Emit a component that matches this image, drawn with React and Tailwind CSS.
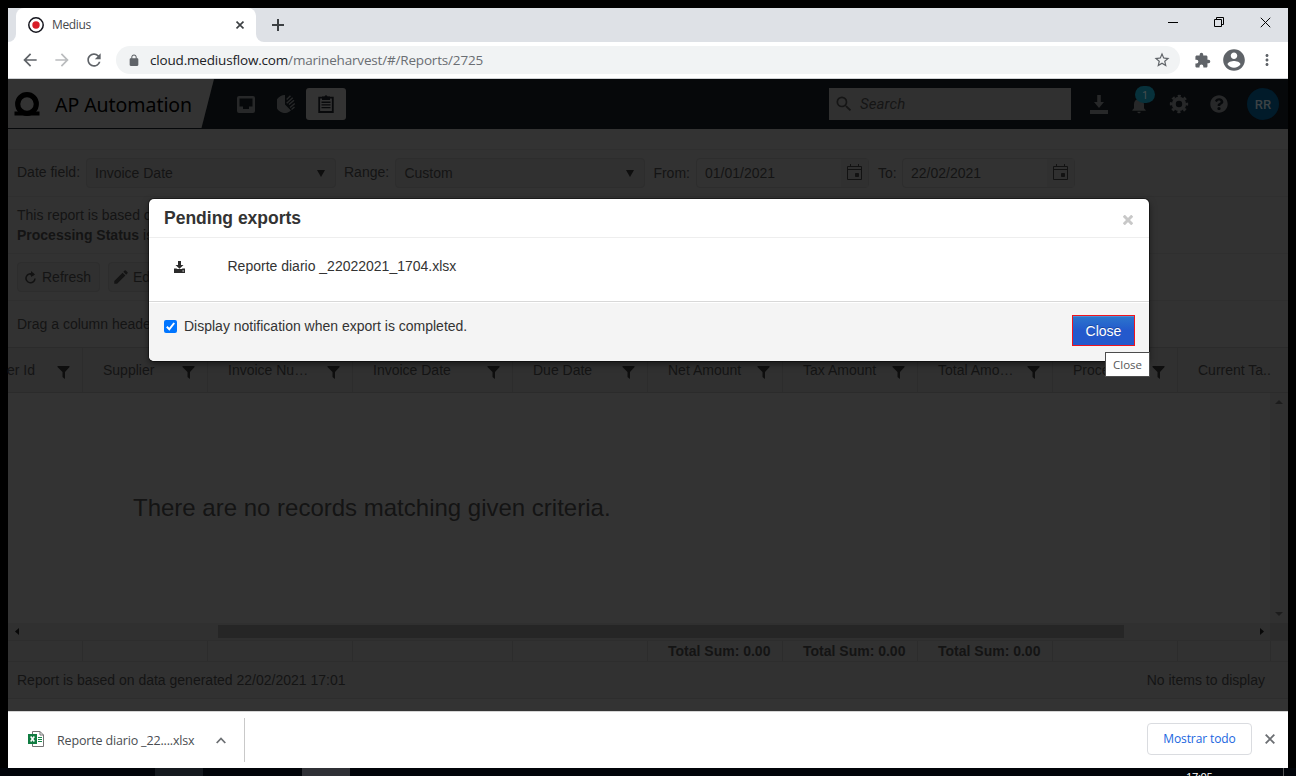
import React from "react";
import {
  MdArrowBack, MdArrowForward, MdRefresh, MdStarBorder,
  MdMoreVert, MdSearch, MdNotifications, MdCreate,
} from "react-icons/md";
import { FaQuestionCircle } from "react-icons/fa";

const columns = [
  { w: "w-[75px]", label: "er Id", pad: "pl-0" },
  { w: "w-[125px]", label: "Supplier", pad: "pl-5" },
  { w: "w-[145px]", label: "Invoice Nu…", pad: "pl-5" },
  { w: "w-[160px]", label: "Invoice Date", pad: "pl-5" },
  { w: "w-[135px]", label: "Due Date", pad: "pl-5" },
  { w: "w-[135px]", label: "Net Amount", pad: "pl-5", sum: "Total Sum: 0.00" },
  { w: "w-[135px]", label: "Tax Amount", pad: "pl-5", sum: "Total Sum: 0.00" },
  { w: "w-[135px]", label: "Total Amo…", pad: "pl-5", sum: "Total Sum: 0.00" },
  { w: "w-[125px]", label: "Proce", pad: "pl-5" },
];

const LOCK = "M18 8h-1V6c0-2.76-2.24-5-5-5S7 3.24 7 6v2H6c-1.1 0-2 .9-2 2v10c0 1.1.9 2 2 2h12c1.1 0 2-.9 2-2V10c0-1.1-.9-2-2-2zM15.1 8H8.9V6c0-1.71 1.39-3.1 3.1-3.1s3.1 1.39 3.1 3.1v2z";
const PUZZLE = "M20.5 11H19V7c0-1.1-.9-2-2-2h-4V3.5a2.5 2.5 0 0 0-5 0V5H4c-1.1 0-2 .9-2 2v3.8h1.5a2.7 2.7 0 0 1 0 5.4H2V20c0 1.1.9 2 2 2h3.8v-1.5a2.7 2.7 0 0 1 5.4 0V22H17c1.1 0 2-.9 2-2v-4h1.500a2.500 2.500 0 0 0 0-5z";
const PERSON = "M12 2C6.48 2 2 6.48 2 12s4.48 10 10 10 10-4.48 10-10S17.52 2 12 2zm0 3c1.66 0 3 1.34 3 3s-1.34 3-3 3-3-1.34-3-3 1.34-3 3-3zm0 14.2c-2.5 0-4.71-1.28-6-3.22.03-1.99 4-3.08 6-3.08s5.97 1.09 6 3.08c-1.29 1.94-3.5 3.22-6 3.22z";

function Glyph({ d, className }) {
  return <svg viewBox="0 0 24 24" fill="currentColor" fillRule="evenodd" className={className}><path d={d} /></svg>;
}

function Cross({ size, color, width }) {
  return (
    <svg width={size} height={size} viewBox="0 0 10 10" fill="none" stroke={color} strokeWidth={width}>
      <path d="M0.7 0.7 9.3 9.3M9.3 0.7 0.7 9.3" />
    </svg>
  );
}

function Funnel() {
  return (
    <svg width="13" height="13" viewBox="0 0 13 13" fill="#0e0e0e" className="shrink-0">
      <path d="M.5 0h12v1L8 6v7L5.500 11V6L.5 1z" />
    </svg>
  );
}

function Calendar() {
  return (
    <svg width="15" height="16" viewBox="0 0 15 16" fill="none" stroke="#121212">
      <path d="M.5 2.500h14v13H.5zM.5 5.500h14M3.500 0v3M11.500 0v3" />
      <path d="M8.500 9.500h3v3h-3z" fill="#121212" />
    </svg>
  );
}

function Select({ children }) {
  return (
    <div className="flex h-[30px] w-[250px] items-center justify-between rounded-sm border border-[#2d2d2d] bg-[#303030] pl-2 pr-[10px]">
      <span>{children}</span>
      <svg width="8" height="7" viewBox="0 0 8 7"><path d="M0 0h8L4 7z" fill="#0e0e0e" /></svg>
    </div>
  );
}

function DateInput({ children }) {
  return (
    <div className="flex h-[30px] w-[173px] rounded-sm border border-[#2d2d2d]">
      <span className="flex w-[144px] items-center pl-2">{children}</span>
      <span className="flex flex-1 items-start justify-center bg-[#303030] pt-[5px]"><Calendar /></span>
    </div>
  );
}

function BrowserChrome() {
  return (
    <>
      <div className="flex h-[34px] bg-[#dee1e6]">
        <div className="w-2 bg-white"><div className="h-full rounded-br-lg bg-[#dee1e6]" /></div>
        <div className="flex w-[240px] items-center rounded-t-lg bg-white pl-3 pr-3">
          <svg width="16" height="16" viewBox="0 0 16 16">
            <circle cx="8" cy="8" r="7.2" fill="#fff" stroke="#15151d" strokeWidth="1.5" />
            <circle cx="8" cy="8" r="3.7" fill="#d81e28" />
          </svg>
          <span className="ml-2 flex-1 font-['Open_Sans',sans-serif] text-[12px] tracking-[-0.35px] text-[#45484c]">Medius</span>
          <Cross size={8} color="#3c4043" width={2} />
        </div>
        <div className="w-2 bg-white"><div className="h-full rounded-bl-lg bg-[#dee1e6]" /></div>
        <svg className="ml-2 mt-[11px]" width="12" height="12" viewBox="0 0 12 12" stroke="#3c4043" strokeWidth="2"><path d="M6 0v12M0 6h12" /></svg>
        <div className="ml-auto mr-[17px] flex h-7 items-center gap-9 text-black">
          <svg width="10" height="10" viewBox="0 0 10 10" stroke="#000"><path d="M0 5.5h10" /></svg>
          <svg width="10" height="10" viewBox="0 0 10 10" stroke="#000" fill="none"><path d="M.5 2.5h7v7h-7zM2.5 2.5v-2h7v7h-2" /></svg>
          <Cross size={11} color="#000" width={0.9} />
        </div>
      </div>
      <div className="flex h-[37px] items-center border-b border-[#cfd1d4] bg-white text-[#5f6368]">
        <MdArrowBack className="ml-3 h-5 w-5" />
        <MdArrowForward className="ml-3 h-5 w-5 text-[#babcbe]" />
        <MdRefresh className="ml-3 h-5 w-5" />
        <div className="ml-3 flex h-7 w-[1064px] items-center rounded-full bg-[#f1f3f4] pl-[11px] pr-[9px]">
          <Glyph d={LOCK} className="h-[13px] w-[14px]" />
          <span className="ml-[9px] flex-1 font-['Open_Sans',sans-serif] text-[13.500px] tracking-[-0.180px] text-[#6a6e73]">
            <span className="text-[#202124]">cloud.mediusflow.com</span>/marineharvest/#/Reports/2725
          </span>
          <MdStarBorder className="h-[18px] w-[18px]" />
        </div>
        <Glyph d={PUZZLE} className="ml-[14px] h-[17px] w-[17px]" />
        <Glyph d={PERSON} className="ml-[10px] h-[26px] w-[26px]" />
        <MdMoreVert className="ml-[11px] h-[18px] w-[18px]" />
      </div>
    </>
  );
}

function AppHeader() {
  return (
    <div className="flex h-[50px] bg-[#06080a]">
      <div className="flex h-[49px] w-[206px] items-center bg-[#333] pl-[6px] [clip-path:polygon(0_0,100%_0,193.5px_100%,0_100%)]">
        <svg width="26" height="24" viewBox="0 0 26 24">
          <circle cx="13" cy="12" r="9.300" fill="none" stroke="#000" strokeWidth="5.200" />
          <path d="M.5 19.500H8l5 1 5-1h7.500v4H.5z" />
        </svg>
        <span className="ml-[15px] mt-[2px] whitespace-nowrap font-['Noto_Sans',sans-serif] text-[19.500px] tracking-[-0.050px] text-black">AP Automation</span>
      </div>
      <div className="flex h-[50px] flex-1 items-center">
        <svg className="ml-[23px]" width="18" height="17" viewBox="0 0 18 17" fill="#272829">
          <path fillRule="evenodd" d="M2 0h14q2 0 2 2v13q0 2-2 2H2q-2 0-2-2V2q0-2 2-2zM2.500 2.500v8H6v2.500h6v-2.500h3.500v-8z" />
        </svg>
        <svg className="ml-[22px]" width="18" height="18" viewBox="0 0 18 18" fill="#272829">
          <path d="M8 0v9.500l6 6A9 9 0 1 1 8 0z" />
          <g stroke="#272829" strokeWidth="1.500" fill="none"><path d="M9.700 4.500 13.500 .8M9.700 8.200l6-5.500M12 9.500l5-4.300M13 12.500l4.800-4M14.500 14.500l3-2.500" /></g>
        </svg>
        <div className="ml-[11px] flex h-8 w-10 items-center justify-center rounded-[3px] bg-[#333]">
          <svg width="16" height="18" viewBox="0 0 16 18">
            <path d="M1.200 2.700h13.600v14.300H1.200z" fill="none" stroke="#08090b" strokeWidth="1.800" />
            <path d="M4 1.500h2.500Q8-1 9.500 1.500H12V5H4zM3.500 6.500h9v1.400h-9zM3.500 9.200h9v1.400h-9zM3.500 11.900h9v1.400h-9z" fill="#08090b" />
          </svg>
        </div>
        <div className="ml-auto flex h-8 w-[242px] items-center bg-[#303030] pl-[5px] font-['Roboto',sans-serif] text-[15px] italic tracking-[0.1px] text-[#151515]">
          <MdSearch className="mr-[6px] h-5 w-5" />Search
        </div>
        <svg className="ml-[19px]" width="18" height="19" viewBox="0 0 18 19" fill="#272829">
          <path d="M7.200 0h3.600v7H14l-5 6-5-6h3.200zM0 15h18v4H0z" />
        </svg>
        <div className="relative ml-[21px] h-5 w-5 text-[#272829]">
          <MdNotifications className="mt-[1px] h-5 w-5" />
          <div className="absolute -top-[8px] left-[6px] flex h-[17px] w-5 items-center justify-center rounded-full bg-[#07313b] pt-[2px] font-['Roboto',sans-serif] text-[10px] text-[#4a4f50]">1</div>
        </div>
        <svg className="ml-5 mr-px" width="20" height="20" viewBox="0 0 20 20" fill="none" stroke="#272829">
          <circle cx="10" cy="10" r="5.200" strokeWidth="4" />
          <circle cx="10" cy="10" r="8" strokeWidth="2.400" strokeDasharray="3.200 3.083" strokeDashoffset="1.600" />
        </svg>
        <FaQuestionCircle className="ml-[20px] mr-[2px] h-[18px] w-[18px] text-[#272829]" />
        <div className="ml-[17px] mr-[9px] flex h-8 w-8 items-center justify-center rounded-full bg-[#011b2a] pt-px font-['Roboto',sans-serif] text-[13px] font-medium text-[#3c4245]">RR</div>
      </div>
    </div>
  );
}

function Report() {
  return (
    <div className="flex h-[582px] flex-col bg-[#333] pt-5 text-[14px] leading-5 text-[#141414]">
      <div className="flex h-[48px] items-center border-y border-[#2f2f2f] bg-[#323232] pl-[9px]">
        <span className="w-[69px] pb-0.5">Date field:</span>
        <Select>Invoice Date</Select>
        <span className="ml-2 w-[51.400px] pb-0.5">Range:</span>
        <Select>Custom</Select>
        <span className="ml-2 w-[42.600px]">From:</span>
        <DateInput>01/01/2021</DateInput>
        <span className="ml-[9px] w-[24px]">To:</span>
        <DateInput>22/02/2021</DateInput>
      </div>
      <div className="h-[57px] border-b border-[#2f2f2f] bg-[#323232] pl-[9px] pt-2">
        <div>This report is based o</div>
        <div><b>Processing Status</b> is</div>
      </div>
      <div className="flex h-[47px] items-center gap-2 border-b border-[#2f2f2f] bg-[#323232] pl-[9px]">
        <div className="flex h-[30px] w-[83px] items-center rounded-sm border border-[#2d2d2d] bg-[#303030] pl-[7px]">
          <svg className="mr-[6px]" width="11" height="13" viewBox="0 0 11 13" fill="none" stroke="#121212" strokeWidth="1.500"><path d="M8 3.500A4.500 4.500 0 1 0 10 7.500M5 3.500h4" /><path d="M6 0l4 3.500L6 6z" fill="#121212" stroke="none" /></svg>
          Refresh
        </div>
        <div className="flex h-[30px] w-[66px] items-center rounded-sm border border-[#2d2d2d] bg-[#303030] pl-[3px]">
          <MdCreate className="mr-[3px] h-[18px] w-[18px]" />Ed
        </div>
      </div>
      <div className="flex h-[46px] items-center bg-[#323232] pl-[9px]">Drag a column heade</div>
      <div className="flex h-[46px] shrink-0 border-y border-[#2b2b2b] bg-[#303030]">
        {columns.map((c) => (
          <div key={c.label} className={`flex shrink-0 justify-between border-r border-[#2c2c2c] pr-[12.500px] pt-3 ${c.w} ${c.pad}`}>
            <span className={c.pad === "pl-0" ? "-ml-px" : ""}>{c.label}</span><span className="pt-[6px]"><Funnel /></span>
          </div>
        ))}
        <div className="pl-5 pt-3">Current Ta..</div>
      </div>
      <div className="flex h-[230px] shrink-0">
        <div className="flex-1 pl-[125px] pt-[99px] text-[24px] leading-8">There are no records matching given criteria.</div>
        <div className="flex w-[18px] flex-col items-center justify-between bg-[#303030] py-[7px]">
          <svg width="8" height="4" viewBox="0 0 8 4"><path d="M0 4 4 0l4 4z" fill="#1c1c1c" /></svg>
          <svg width="8" height="4" viewBox="0 0 8 4"><path d="M0 0h8L4 4z" fill="#1c1c1c" /></svg>
        </div>
      </div>
      <div className="flex h-[17px] shrink-0 items-center bg-[#303030] pl-[7px]">
        <svg width="4" height="7" viewBox="0 0 4 7"><path d="M4 0v7L0 3.500z" fill="#080808" /></svg>
        <div className="ml-[199px] h-[13px] w-[906px] bg-[#262626]" />
        <svg className="ml-[136px]" width="4" height="7" viewBox="0 0 4 7"><path d="M0 0v7l4-3.500z" fill="#080808" /></svg>
        <div className="ml-auto h-full w-[18px] bg-[#2c2c2c]" />
      </div>
      <div className="flex h-[22px] shrink-0 border-y border-[#2d2d2d] bg-[#313131]">
        {columns.map((c) => (
          <div key={c.label} className={`shrink-0 whitespace-nowrap border-r border-[#2c2c2c] font-bold ${c.w} ${c.pad}`}>{c.sum}</div>
        ))}
        <div className="w-[93px] border-r border-[#2c2c2c]" />
      </div>
      <div className="flex h-[37px] shrink-0 items-center justify-between border-b border-[#2d2d2d] bg-[#313131] pl-[9px] pr-[23px]">
        <span>Report is based on data generated 22/02/2021 17:01</span>
        <span>No items to display</span>
      </div>
    </div>
  );
}

function Modal() {
  return (
    <div className="absolute left-[149px] top-[199px] flex h-[162px] w-[1000px] flex-col rounded-[5px] bg-white text-[14px] text-[#333] shadow-[0_3px_7px_rgba(0,0,0,0.5),0_0_0_1px_rgba(0,0,0,0.4)]">
      <div className="flex h-[39px] items-center justify-between border-b border-[#eee] pl-[15px] pr-4">
        <h3 className="text-[17.500px] font-bold">Pending exports</h3>
        <span className="pt-[3px]"><Cross size={10} color="#c8c8c8" width={3} /></span>
      </div>
      <div className="flex h-[63px] items-start pl-6 pt-[18px]">
        <svg className="mr-px mt-[5px]" width="12" height="12" viewBox="0 0 12 12" fill="#2b2b2b">
          <path d="M5 0h3v4h2.500L6.500 7.800 2.500 4H5z" />
          <path fillRule="evenodd" d="M1 7.500h2.500L6.500 9.600l3-2.100H12V12H1zM9.500 9.500v1h1.300v-1z" />
          <path d="M4 8h5v2H4z" />
        </svg>
        <span className="ml-[41.500px]">Reporte diario _22022021_1704.xlsx</span>
      </div>
      <div className="flex flex-1 justify-between rounded-b-[5px] border-t border-[#d8d8d8] bg-[#f4f4f4] pl-[15px] pr-[14px] shadow-[inset_0_1px_0_#fff]">
        <div className="mt-[18px] flex h-[13px] items-center">
          <svg width="13" height="13" viewBox="0 0 13 13"><rect width="13" height="13" rx="2" fill="#0075ff" /><path d="M2.800 6.800 5.300 9.300 10.200 3" fill="none" stroke="#fff" strokeWidth="2" /></svg>
          <span className="ml-[7px]">Display notification when export is completed.</span>
        </div>
        <div className="mt-[13px] flex h-[31px] w-[63px] items-center justify-center border border-[#f0141e] bg-linear-to-b from-[#2d76cd] to-[#2459cc] to-50% pt-[2px] text-white shadow-[inset_0_1px_0_#4a8fd8] [text-shadow:0_-1px_0_rgba(0,0,0,0.25)]">Close</div>
      </div>
      <div className="absolute left-[956px] top-[153px] flex h-[25px] w-[45px] items-center justify-center border border-[#4c4c4c] bg-white font-['Open_Sans',sans-serif] text-[11.500px] text-[#575757]">Close</div>
    </div>
  );
}

function Downloads() {
  return (
    <div className="flex h-[57px] items-center border-t border-[#d5d5d5] bg-white font-['Open_Sans',sans-serif] text-[12.500px]">
      <svg className="mb-[2px] ml-5" width="16" height="16" viewBox="0 0 16 16">
        <path d="M4.500 3V.5h7.500l3.500 3.500v11.500h-11V12M12 .5V4h3.500" fill="#fff" stroke="#737373" />
        <path d="M10 6.500h4M10 8.500h4M10 10.500h4" stroke="#17864a" />
        <path d="M0 3h9v10H0z" fill="#107c41" />
        <path d="M2.700 5.500 6.300 10.500M6.300 5.500 2.700 10.500" stroke="#fff" strokeWidth="1.500" />
      </svg>
      <span className="ml-[13px] w-[159px] pt-[2px] tracking-[-0.160px] text-[#4a4d51]">Reporte diario _22....xlsx</span>
      <svg width="10" height="7" viewBox="0 0 10 7" fill="none" stroke="#6c6f73" strokeWidth="1.800"><path d="M.7 6 5 1.500 9.300 6" /></svg>
      <div className="ml-[18px] h-11 w-px bg-[#c9c9c9]" />
      <div className="mb-[2px] ml-auto flex h-8 w-[105px] items-center justify-center rounded border border-[#dadce0] text-[12px] font-medium tracking-[-0.100px] text-[#1a66e0]">Mostrar todo</div>
      <div className="mb-[2px] ml-[13px] mr-[13px]"><Cross size={10} color="#6c6f73" width={1.900} /></div>
    </div>
  );
}

export default function App() {
  return (
    <div className="relative h-[776px] w-[1296px] overflow-hidden bg-black font-['Liberation_Sans',Arial,sans-serif]">
      <div className="mx-2 flex flex-col pt-2">
        <BrowserChrome />
        <AppHeader />
        <Report />
        <Downloads />
      </div>
      <div className="flex h-2 overflow-hidden bg-[#010409] pl-[155px]">
        <div className="w-12 bg-[#15191e]" />
        <div className="ml-[99px] w-12 bg-[#2f3035]" />
        <span className="ml-[836px] mt-[3px] font-['Open_Sans',sans-serif] text-[11px] leading-3 tracking-[-0.300px] text-white">17:05</span>
        <div className="ml-auto mr-3 w-px bg-[#555]" />
      </div>
      <Modal />
    </div>
  );
}
